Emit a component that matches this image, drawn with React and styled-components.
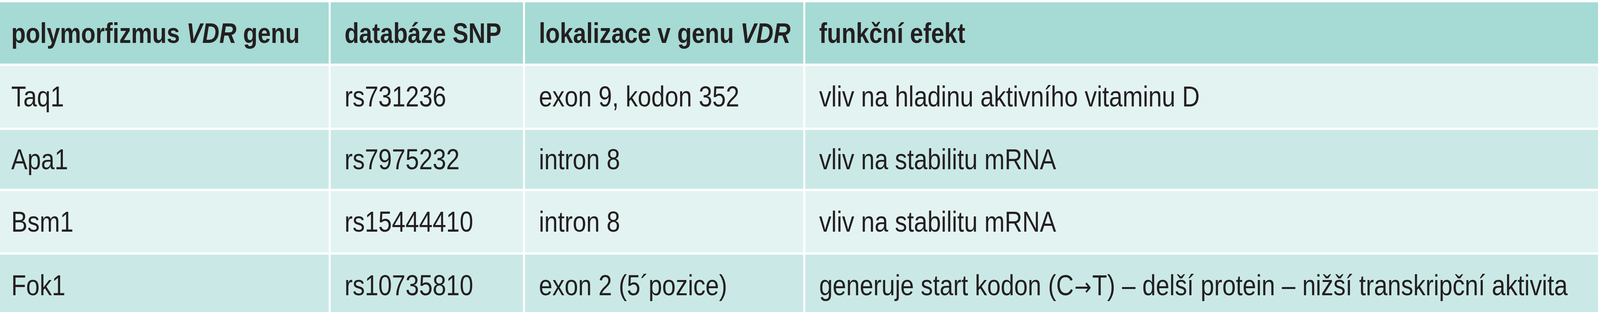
import React from "react"
import styled, { createGlobalStyle } from "styled-components"

const GlobalStyle = createGlobalStyle`
    html, body {
        margin: 0;
        padding: 0;
        background: #ffffff;
        overflow: hidden;
    }
    body {
        font-family: "Liberation Sans", Arial, sans-serif;
        color: #231f20;
    }
`

// the table is drawn for a 4858px wide page; squeeze it when the window is narrower
const DESIGN_WIDTH = 4858

const rows = [
    { gene: "Taq1", snp: "rs731236", place: "exon 9, kodon 352", effect: "vliv na hladinu aktivního vitaminu D", height: 158 },
    { gene: "Apa1", snp: "rs7975232", place: "intron 8", effect: "vliv na stabilitu mRNA", height: 151 },
    { gene: "Bsm1", snp: "rs15444410", place: "intron 8", effect: "vliv na stabilitu mRNA", height: 157 },
    { gene: "Fok1", snp: "rs10735810", place: "exon 2 (5´pozice)", effect: "generuje start kodon (C→T) – delší protein – nižší transkripční aktivita", height: 157 },
]

// arrows come from a font that draws them at full size
function Effect({ text }) {
    const parts = text.split("→")
    return parts.map((part, i) => (
        <React.Fragment key={i}>
            {i > 0 && <Arrow>→</Arrow>}
            {part}
        </React.Fragment>
    ))
}

export default function App() {
    const fit = typeof window !== "undefined" ? Math.min(1, window.innerWidth / DESIGN_WIDTH) : 1

    return (
        <>
            <GlobalStyle />
            <Table style={{ transform: `scaleX(${fit})` }}>
                <Row $height={157}>
                    <Cell $tone="head" $first>
                        <HeadText>polymorfizmus <i>VDR</i> genu</HeadText>
                    </Cell>
                    <Cell $tone="head">
                        <HeadText>databáze SNP</HeadText>
                    </Cell>
                    <Cell $tone="head">
                        <HeadText>lokalizace v genu <i>VDR</i></HeadText>
                    </Cell>
                    <Cell $tone="head">
                        <HeadText>funkční efekt</HeadText>
                    </Cell>
                </Row>
                {rows.map((row, i) => {
                    const tone = i % 2 === 0 ? "light" : "mid"
                    return (
                        <Row key={row.gene} $height={row.height}>
                            <Cell $tone={tone} $first>{row.gene}</Cell>
                            <Cell $tone={tone}>{row.snp}</Cell>
                            <Cell $tone={tone}>{row.place}</Cell>
                            <Cell $tone={tone}>
                                <span><Effect text={row.effect} /></span>
                            </Cell>
                        </Row>
                    )
                })}
            </Table>
        </>
    )
}

const tones = {
    head: "#a6dad4",
    light: "#e3f3f1",
    mid: "#cae9e6",
}

const Table = styled.div`
    width: 4852px;
    padding-top: 6px;
    display: flex;
    flex-direction: column;
    gap: 6px;
    transform-origin: 0 0;
`

const Row = styled.div`
    display: grid;
    grid-template-columns: 998px 584px 845px minmax(0, 1fr);
    column-gap: 6px;
    height: ${(p) => p.$height}px;
`

const Cell = styled.div`
    display: flex;
    align-items: center;
    padding-left: ${(p) => (p.$first ? 34 : 42)}px;
    background: ${(p) => tones[p.$tone]};
    font-size: 74px;
    line-height: 1;
    white-space: nowrap;
    overflow: hidden;
`

const HeadText = styled.span`
    font-weight: 700;
    font-size: 72px;

    i {
        font-style: italic;
    }
`

const Arrow = styled.span`
    font-family: "DejaVu Sans", sans-serif;
    font-size: 62px;
    margin: 0 2px;
`
